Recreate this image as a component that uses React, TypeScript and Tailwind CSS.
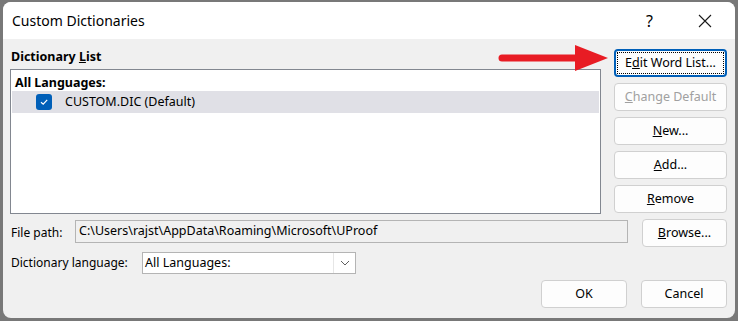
import React from "react";

const font = { fontFamily: '"Noto Sans", "Open Sans", sans-serif' };

function Btn({ children, className = "", disabled = false, focused = false }: { children: React.ReactNode; className?: string; disabled?: boolean; focused?: boolean }) {
  if (focused) {
    return (
      <div className={`h-[28px] rounded-[4px] border-2 border-[#005fb8] bg-[#fdfdfd] p-[1px] ${className}`}>
        <div className="h-full w-full border border-dotted border-black flex items-center justify-center text-[12.5px] text-black">
          {children}
        </div>
      </div>
    );
  }
  return (
    <div
      className={`h-[28px] rounded-[4px] border border-[#d0d0d0] bg-[#fdfdfd] flex items-center justify-center text-[12.5px] ${disabled ? "text-[#a0a0a0]" : "text-black"} ${className}`}
    >
      {children}
    </div>
  );
}

export default function App() {
  return (
    <div className="w-[738px] h-[321px] bg-[#787878] pt-[2px] pl-[3px] pr-[3px] pb-[3px]" style={font}>
      <div className="relative h-full rounded-[8px] overflow-hidden bg-[#f0f0f0] flex flex-col">
        {/* title bar */}
        <div className="h-[37px] bg-white flex items-center shrink-0">
          <span className="pl-[9px] text-[14px] text-black">Custom Dictionaries</span>
          <div className="ml-auto flex items-center">
            <span className="text-[16px] text-black mr-[45px]">?</span>
            <svg width="14" height="14" viewBox="0 0 14 14" className="mr-[23px]">
              <path d="M1 1 L13 13 M13 1 L1 13" stroke="#1a1a1a" strokeWidth="1.1" fill="none" />
            </svg>
          </div>
        </div>

        {/* body */}
        <div className="flex-1 pl-[7px] pr-[8px] pt-[10px]">
          <div className="flex gap-[13px]">
            <div className="w-[591px]">
              <div className="h-[20px] pl-[1px] text-[12.5px] font-bold text-black leading-[16px]">
                Dictionary <span className="underline">L</span>ist
              </div>
              <div className="h-[145px] border border-[#828790] bg-white px-[1px] pt-[4px]">
                <div className="pl-[3px] h-[17px] text-[12.5px] font-bold text-black leading-[17px]">All Languages:</div>
                <div className="h-[22px] bg-[#e0e0e6] flex items-center">
                  <div className="ml-[24px] w-[16px] h-[16px] rounded-[3px] bg-[#005fb8] flex items-center justify-center">
                    <svg width="10" height="10" viewBox="0 0 10 10">
                      <path d="M2 5.2 L4.2 7.2 L8.2 2.8" stroke="white" strokeWidth="1.2" fill="none" />
                    </svg>
                  </div>
                  <span className="ml-[13px] text-[12.5px] text-black">CUSTOM.DIC (Default)</span>
                </div>
              </div>
            </div>
            <div className="w-[113px] flex flex-col gap-[6px]">
              <Btn focused>
                E<span className="underline">d</span>it Word List...
              </Btn>
              <Btn disabled>
                <span className="underline">C</span>hange Default
              </Btn>
              <Btn>
                <span className="underline">N</span>ew...
              </Btn>
              <Btn>
                <span className="underline">A</span>dd...
              </Btn>
              <Btn>
                <span className="underline">R</span>emove
              </Btn>
            </div>
          </div>

          {/* file path row */}
          <div className="flex items-center mt-[5px] h-[28px]">
            <span className="w-[65px] pl-[1px] text-[12px] text-black">File path:</span>
            <div className="w-[553px] h-[23px] border border-[#b4b4b4] bg-[#f0f0f0] flex items-center pl-[3px] text-[12.5px] text-black mb-[4px]">
              C:\Users\rajst\AppData\Roaming\Microsoft\UProof
            </div>
            <Btn className="ml-auto w-[85px] h-[27px]">
              <span className="underline">B</span>rowse...
            </Btn>
          </div>

          {/* language row */}
          <div className="flex items-center mt-[5px] h-[22px]">
            <span className="w-[132px] pl-[1px] text-[12px] text-black">Dictionary language:</span>
            <div className="w-[214px] h-[22px] border border-[#b4b4b4] bg-white flex items-center text-[12.5px] text-black">
              <span className="pl-[2px] flex-1">All Languages:</span>
              <div className="w-[22px] h-full border-l border-[#e6e6e6] flex items-center justify-center">
                <svg width="10" height="6" viewBox="0 0 10 6">
                  <path d="M1 1 L5 5 L9 1" stroke="#606060" strokeWidth="1" fill="none" />
                </svg>
              </div>
            </div>
          </div>

          {/* OK / Cancel */}
          <div className="flex justify-end gap-[14px] mt-[6px]">
            <Btn className="w-[86px] h-[27px]">OK</Btn>
            <Btn className="w-[86px] h-[27px]">Cancel</Btn>
          </div>
        </div>

        {/* red annotation arrow */}
        <svg className="absolute left-[494px] top-[39px]" width="112" height="32" viewBox="0 0 112 32">
          <line x1="5" y1="17" x2="80" y2="17" stroke="#e81c24" strokeWidth="7" strokeLinecap="round" />
          <polygon points="78,4 111,17 78,30" fill="#e81c24" />
        </svg>
      </div>
    </div>
  );
}
